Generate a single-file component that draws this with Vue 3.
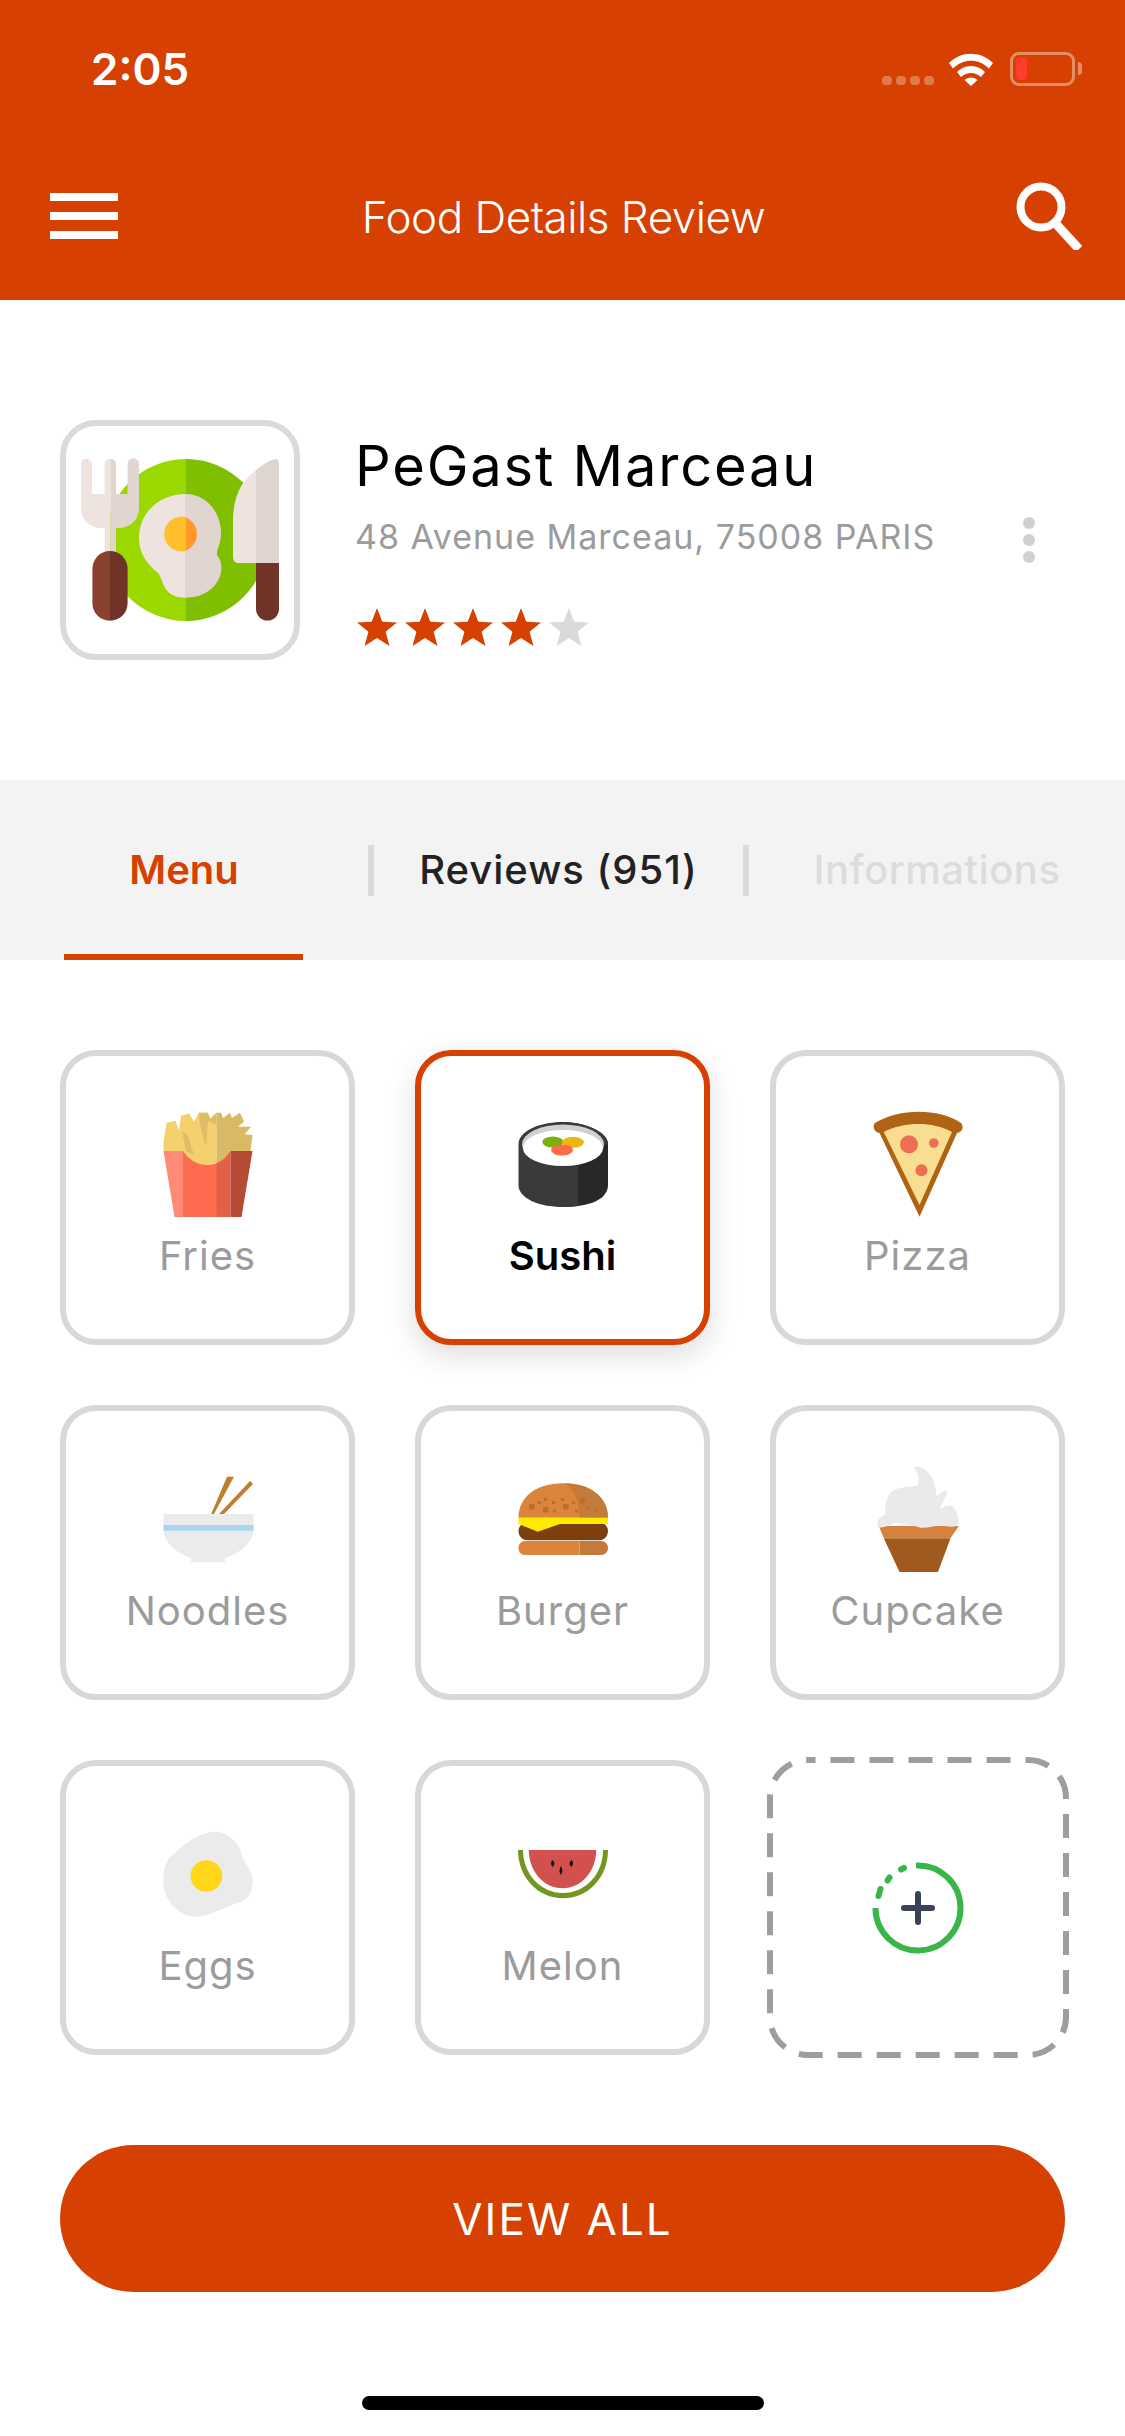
<template>
  <div class="screen">
    <header class="header">
      <div class="status">
        <span class="time">2:05</span>
        <div class="status-icons">
          <div class="signal"><i></i><i></i><i></i><i></i></div>
          <svg class="wifi" width="46" height="34" viewBox="0 0 46 34">
            <path d="M1 11 C13 -1.5 33 -1.5 45 11 L41 16.5 C31 6 15 6 5 16.5 Z" fill="#fff" />
            <path d="M9 20 C16 12 30 12 37 20 L33 25 C27 19.500 19 19.500 13 25 Z" fill="#fff" />
            <path d="M16.500 28 C20 24.500 26 24.500 29.500 28 L23 34 Z" fill="#fff" />
          </svg>
          <div class="battery"><i></i></div>
          <div class="battery-nub"></div>
        </div>
      </div>
      <div class="nav">
        <div class="burger"><i></i><i></i><i></i></div>
        <h1 class="title">Food Details Review</h1>
        <svg class="search" width="68" height="68" viewBox="0 0 68 68">
          <circle cx="25" cy="25" r="20.500" fill="none" stroke="#fff" stroke-width="8" />
          <path d="M41 43 L63 67" stroke="#fff" stroke-width="9" fill="none" />
        </svg>
      </div>
    </header>

    <section class="profile">
      <div class="logo">
        <svg width="228" height="228" viewBox="6 6 228 228">
          <path d="M126 39 A81 81 0 0 0 126 201 Z" fill="#9bd800" />
          <path d="M126 39 A81 81 0 0 1 126 201 Z" fill="#80bf00" />
          <path d="M21 44 a5.500 5.500 0 0 1 11 0 V74 H44.600 V44 a5.700 5.700 0 0 1 5.800 -5 V132 H44.600 V108 H42 C30 108 21 100 21 88 Z" fill="#efe3df" />
          <path d="M50.400 39 a5.700 5.700 0 0 1 5.600 5 V74 H67.600 V44 a5.700 5.700 0 0 1 11.400 0 V88 C79 100 70 108 58 108 H56 V132 H50.400 Z" fill="#e1d5d0" />
          <path d="M50 131 C40 131 32.400 139 32.400 149 V183 C32.400 193 40 200.700 50 200.700 Z" fill="#8a4130" />
          <path d="M50 131 C60 131 67.600 139 67.600 149 V183 C67.600 193 60 200.700 50 200.700 Z" fill="#6f3427" />
          <path d="M125.800 74 C100 74 79 92 79 118 C79 136 90 146 98 153 C104 160 102 177.700 125.800 177.700 Z" fill="#efe3df" />
          <path d="M125.800 74 C146 74 161 92 161 113 C161 125 156 130 157 135 C161 140 162 146 161 152 C158 168 143 177.700 125.800 177.700 Z" fill="#e1d5d0" />
          <path d="M125.800 97 A17.500 17.500 0 1 0 125.800 131 Z" fill="#ffc02b" />
          <path d="M125.800 97 C130 100 137 104 137 114 C137 124 130 128 125.800 131 Z" fill="#ff9a26" />
          <path d="M196 50 C182 60 173 76 173 100 V137 Q173 143 179 143 H196 Z" fill="#efe3df" />
          <path d="M196 50 C202 45 208 41 215 39 Q219 39 219 44 V143 H196 Z" fill="#e1d5d0" />
          <path d="M196 143 H219 V189 A11.500 11.500 0 0 1 196 189 Z" fill="#6f3427" />
        </svg>
      </div>
      <div class="info">
        <div class="name">PeGast Marceau</div>
        <div class="address">48 Avenue Marceau, 75008 PARIS</div>
        <div class="stars">
          <svg v-for="n in 5" :key="n" width="40" height="38" viewBox="0 0 40 38">
            <path d="M20 0 L25.300 13.700 L40 14.500 L28.600 23.800 L32.400 38 L20 30 L7.600 38 L11.400 23.800 L0 14.500 L14.700 13.700 Z" :fill="n < 5 ? '#d64000' : '#dadada'" />
          </svg>
        </div>
      </div>
      <div class="more"><i></i><i></i><i></i></div>
    </section>

    <nav class="tabs">
      <div class="tab tab-active">Menu<span class="tab-line"></span></div>
      <span class="tab-divider"></span>
      <div class="tab tab-dark">Reviews (951)</div>
      <span class="tab-divider"></span>
      <div class="tab tab-muted">Informations</div>
    </nav>

    <section class="grid">
      <div class="card">
        <svg class="food" viewBox="0 0 120 120">
          <path d="M15.500 37 L18.500 18 L27.500 15.700 L31 26 L33 11 L41 8.300 L46 16.700 L51 7.700 H60 L62 14 L68.500 7.700 V62 C50 62 38 60 30 46 H15.500 Z" fill="#f4d06f" />
          <path d="M68.500 7.700 H73 L75 13 L82 7.700 L84 13 L92 7.700 L96 16.700 L90 21.700 H103 L96.500 29.300 L104.500 30 L102.500 46 H82.500 C80 56 75 61 68.500 62 Z" fill="#d9b965" />
          <path d="M34 26 L40 31 L46 50 L38 46 Z M51 7.700 H60 L62 14 L68.500 7.700 L68.500 20 L60 16 L58 42 L52 20 Z" fill="#dfbd66" />
          <path d="M35 46 C42 56 50 60 60 60 C68 60 76 56 82.500 46 L68.500 112 H35 Z" fill="#ff6b4f" />
          <path d="M68.500 58 C74 57 79 52 82.500 46 V112 H68.500 Z" fill="#e35f45" />
          <path d="M82.500 46 H104.500 L93.500 112 H82.500 Z" fill="#b54b35" />
          <path d="M15.500 46 H35 V112 H26.500 Z" fill="#ff8a75" />
        </svg>
        <span class="label">Fries</span>
      </div>

      <div class="card card-active">
        <svg class="food" viewBox="0 0 120 120">
          <path d="M75 18.500 C92 22 105 30 105 39 V80 C105 92 92 99 75 101 Q68 102 60 102 V17 Q68 17 75 18.500 Z" fill="#282828" />
          <path d="M15.500 39 C15.500 27 35 17 60 17 Q68 17 75 18.500 V101 Q68 102 60 102 C35 102 15.500 93 15.500 80 Z" fill="#3a3a3a" />
          <path d="M75 18.500 C92 22 105 30 105 39 L75 45 Z" fill="#3a3a3a" />
          <ellipse cx="60" cy="39.500" rx="41" ry="20" fill="#d0d0d0" />
          <ellipse cx="60" cy="43" rx="40" ry="18" fill="#fff" />
          <ellipse cx="49.800" cy="37" rx="10.500" ry="5.500" fill="#7cb00f" />
          <ellipse cx="70" cy="37.300" rx="11" ry="5.500" fill="#efb60f" />
          <ellipse cx="59" cy="45" rx="11" ry="5.500" fill="#ff6b45" />
        </svg>
        <span class="label">Sushi</span>
      </div>

      <div class="card">
        <svg class="food" viewBox="0 0 120 120">
          <path d="M17 18 C30 10 45 6.700 60.800 6.700 C76 6.700 92 10 103 18 C106 21 105 27 99 28 L61.500 111.700 L21.500 28 C16 27 14 21 17 18 Z" fill="#af6314" />
          <path d="M25.800 27 C36 21.500 48 19 60.800 19 C72 19 84 21.500 94 27 L61.500 100 Z" fill="#f9dd90" />
          <circle cx="51" cy="39.300" r="9" fill="#ec6f55" />
          <circle cx="75.800" cy="38" r="4.800" fill="#ec6f55" />
          <circle cx="63.500" cy="65.300" r="6" fill="#ec6f55" />
        </svg>
        <span class="label">Pizza</span>
      </div>

      <div class="card">
        <svg class="food" viewBox="0 0 120 120">
          <path d="M63.200 54 L79 16.700 H86 L66 54 Z" fill="#c07e30" />
          <path d="M71 54 L102 21 L105 24 L76 54 Z" fill="#c07e30" />
          <path d="M15.500 54 H105.500 V72 C103 84 92 93 77 98 V102 H43 V98 C28 93 18 84 15.500 72 Z" fill="#ebebeb" />
          <rect x="15.500" y="65" width="90" height="5.700" fill="#a8d6f2" />
        </svg>
        <span class="label">Noodles</span>
      </div>

      <div class="card">
        <svg class="food" viewBox="0 0 120 120">
          <path d="M15.500 57.700 C15.500 37 33 23.300 60 23.300 C87 23.300 105 37 105 57.700 Z" fill="#db853c" />
          <path d="M62 23.300 C87 23.300 105 37 105 57.700 H76.500 C76.500 44 72 30 62 23.300 Z" fill="#c47a3a" />
          <g fill="#b9702f">
            <rect x="26" y="44" width="5.500" height="5.500" /><rect x="34.500" y="41" width="3" height="3" />
            <rect x="40" y="47" width="5.500" height="5.500" /><rect x="41" y="38" width="3" height="3" />
            <rect x="49" y="41" width="3" height="3" /><rect x="50" y="49.500" width="3" height="3" />
            <rect x="58" y="38" width="3" height="3" /><rect x="60" y="44" width="5.500" height="5.500" />
            <rect x="69" y="41" width="3" height="3" /><rect x="72" y="49.500" width="3" height="3" />
            <rect x="77" y="38" width="5.500" height="5.500" /><rect x="83" y="47" width="3" height="3" />
            <rect x="91" y="49.500" width="3" height="3" />
          </g>
          <rect x="15.500" y="62" width="89.500" height="18.300" rx="9" fill="#7c3f0e" />
          <path d="M15.500 57.700 H105 V64 H56.800 L34.800 71.700 L15.500 64 Z" fill="#ffea00" />
          <path d="M76.500 81 H22 C18 81 15.500 84 15.500 88 C15.500 92 18 95 22 95 H76.500 Z" fill="#db853c" />
          <path d="M76.500 81 H98 C102 81 105 84 105 88 C105 92 102 95 98 95 H76.500 Z" fill="#c47a3a" />
        </svg>
        <span class="label">Burger</span>
      </div>

      <div class="card">
        <svg class="food" viewBox="0 0 120 120">
          <path d="M25.800 78.300 H92.500 L80 112 H41.500 Z" fill="#a05a1e" />
          <path d="M20.800 66 H100.800 L92.500 78.300 H25.800 Z" fill="#d4823c" />
          <path d="M55.800 7.300 C64 5 72 12 75 20 C78 28 78 33 78.500 36 C82 34 88 29 89 31 C90 35 83 44 82 49 C87 46 92 44 95 47 C99 51 101 60 101 63 C97 68 92 67 87 66 C78 64 68 70 60 67 C50 64 45 64 38 63 C32 64 26 69 20 67 C18 61 22 56 27 55 C27 44 29 36 34 31 C40 27 50 27 59 26 C62 22 61 15 55.800 7.300 Z" fill="#eaeaea" />
        </svg>
        <span class="label">Cupcake</span>
      </div>

      <div class="card">
        <svg class="food" viewBox="0 0 120 120">
          <path d="M65.800 16.700 C77 16 90 26 92.500 36 C95 48 105 56 104.800 66 C104 78 100 84 92.500 87 C80 90 62 102 47 101.700 C29 101 16 84 15.300 68.300 C15 54 18 46 23 41 C31 35 46 18 65.800 16.700 Z" fill="#ebebeb" />
          <ellipse cx="58.400" cy="61" rx="15.800" ry="15.800" fill="#ffd618" />
        </svg>
        <span class="label">Eggs</span>
      </div>

      <div class="card">
        <svg class="food" viewBox="2.500 0 120 120">
          <path d="M17.500 35 H107.500 C107.500 62 88 83.300 62.500 83.300 C37 83.300 17.500 62 17.500 35 Z" fill="#719622" />
          <path d="M22.500 35 H102.500 C102.500 59 85 78 62.500 78 C40 78 22.500 59 22.500 35 Z" fill="#fff" />
          <path d="M28.300 35 H95.700 C95.700 56 81 73.300 62 73.300 C43 73.300 28.300 56 28.300 35 Z" fill="#d2504d" />
          <path d="M52 45 Q56 49 52 52 Q49 48 52 45 Z M71 45 Q74 48 71 52 Q67 49 71 45 Z M60.500 51 Q63 56 60.500 60 Q57.500 56 60.500 51 Z" fill="#111" />
        </svg>
        <span class="label">Melon</span>
      </div>

      <div class="card card-add">
        <svg class="add-border" width="302" height="301" viewBox="0 0 302 301">
          <rect x="3" y="3" width="296" height="295" rx="38" fill="none" stroke="#9e9e9e" stroke-width="6" stroke-dasharray="24 15" stroke-dashoffset="16.500" />
        </svg>
        <svg class="add-icon" width="100" height="100" viewBox="0 0 100 100">
          <path d="M48 7.500 A42.500 42.500 0 1 1 7.500 50" fill="none" stroke="#3ab54a" stroke-width="6" />
          <path d="M33 11.500 L36 10 M19.500 22.500 L21.500 19.500 M10.500 38 L12.500 31" fill="none" stroke="#3ab54a" stroke-width="6" stroke-linecap="round" />
          <path d="M50 36 V64 M36 50 H64" fill="none" stroke="#3a4259" stroke-width="6" stroke-linecap="round" />
        </svg>
      </div>
    </section>

    <button class="view-all">VIEW ALL</button>
    <div class="home-bar"></div>
  </div>
</template>

<script setup>
</script>

<style scoped>
.screen {
  width: 1125px;
  height: 2436px;
  background: #fff;
  overflow: hidden;
  font-family: Inter, "Liberation Sans", sans-serif;
}

.header {
  height: 300px;
  background: #d64000;
  color: #fff;
}

.status {
  height: 182px;
  display: flex;
  justify-content: space-between;
  align-items: flex-start;
  padding: 46px 43px 0 91px;
  box-sizing: border-box;
}

.time {
  font-size: 44px;
  font-weight: 600;
  line-height: 46px;
}

.status-icons {
  display: flex;
  align-items: flex-start;
  margin-top: 6px;
}

.signal {
  display: flex;
  gap: 4px;
  margin-top: 24px;
  margin-right: 14px;
}

.signal i {
  width: 10px;
  height: 9px;
  border-radius: 4px;
  background: rgba(255, 255, 255, 0.3);
}

.battery {
  width: 65px;
  height: 34px;
  margin-left: 16px;
  border: 3px solid rgba(255, 255, 255, 0.4);
  border-radius: 9px;
  box-sizing: border-box;
  padding: 3px;
}

.battery i {
  display: block;
  width: 11px;
  height: 22px;
  border-radius: 4px;
  background: #ff3b30;
}

.battery-nub {
  width: 4px;
  height: 13px;
  margin: 10px 0 0 3px;
  border-radius: 0 4px 4px 0;
  background: rgba(255, 255, 255, 0.4);
}

.nav {
  display: flex;
  align-items: flex-start;
  justify-content: space-between;
  padding: 0 41px 0 50px;
}

.burger {
  display: flex;
  flex-direction: column;
  gap: 11px;
  margin-top: 11px;
}

.burger i {
  display: block;
  width: 68px;
  height: 8px;
  background: #fff;
}

.title {
  margin: 8px 7px 0 0;
  font-size: 44px;
  font-weight: 300;
  line-height: 54px;
  letter-spacing: -0.5px;
}

.search {
  display: block;
}

.profile {
  display: flex;
  align-items: center;
  padding: 120px 90px 120px 60px;
}

.logo {
  width: 240px;
  height: 240px;
  border: 6px solid #dadada;
  border-radius: 36px;
  box-sizing: border-box;
  flex-shrink: 0;
}

.logo svg {
  display: block;
}

.info {
  flex: 1;
  margin: 0 0 4px 55px;
}

.name {
  font-size: 56px;
  line-height: 70px;
  color: #000;
  letter-spacing: 1.8px;
}

.address {
  margin-top: 14px;
  font-size: 34px;
  line-height: 44px;
  color: #9b9b9b;
  letter-spacing: 1px;
}

.stars {
  display: flex;
  gap: 8px;
  margin-top: 49px;
  margin-left: 2px;
}

.stars svg {
  display: block;
}

.more {
  display: flex;
  flex-direction: column;
  gap: 5px;
}

.more i {
  display: block;
  width: 12px;
  height: 12px;
  border-radius: 50%;
  background: #d0d0d0;
}

.tabs {
  display: grid;
  grid-template-columns: 368px 6px 369px 6px 1fr;
  align-items: center;
  height: 180px;
  background: #f3f3f3;
}

.tab {
  position: relative;
  height: 180px;
  line-height: 180px;
  text-align: center;
  font-size: 40px;
  font-weight: 500;
  letter-spacing: 0.5px;
}

.tab-active {
  color: #d64000;
  font-weight: 600;
  letter-spacing: 0;
}

.tab-dark {
  color: #222;
  letter-spacing: 1px;
}

.tab-muted {
  color: #dcdcdc;
}

.tab-line {
  position: absolute;
  left: 64px;
  bottom: 0;
  width: 239px;
  height: 6px;
  background: #d64000;
}

.tab-divider {
  height: 51px;
  background: #dadada;
}

.grid {
  display: grid;
  grid-template-columns: repeat(3, 295px);
  gap: 60px;
  padding: 90px 60px 0;
}

.card {
  position: relative;
  height: 295px;
  box-sizing: border-box;
  border: 6px solid #d8d8d8;
  border-radius: 36px;
  background: #fff;
  display: flex;
  flex-direction: column;
  align-items: center;
  padding-top: 49px;
}

.card-active {
  border-color: #d64000;
  box-shadow: 0 10px 30px rgba(0, 0, 0, 0.14);
}

.card-active .label {
  color: #000;
  font-weight: 600;
  letter-spacing: 0;
}

.card-add {
  border: none;
  padding: 0;
  justify-content: center;
}

.add-border {
  position: absolute;
  left: -3px;
  top: -3px;
}

.food {
  display: block;
  width: 120px;
  height: 120px;
  flex-shrink: 0;
}

.label {
  margin-top: 7px;
  font-size: 40px;
  line-height: 48px;
  color: #9b9b9b;
  letter-spacing: 1px;
}

.view-all {
  display: block;
  width: 1005px;
  height: 147px;
  margin: 90px 60px 0;
  border: none;
  border-radius: 74px;
  background: #d64000;
  color: #fff;
  font-family: inherit;
  font-size: 44px;
  letter-spacing: 2px;
}

.home-bar {
  width: 402px;
  height: 14px;
  margin: 104px auto 0;
  border-radius: 7px;
  background: #000;
}
</style>
